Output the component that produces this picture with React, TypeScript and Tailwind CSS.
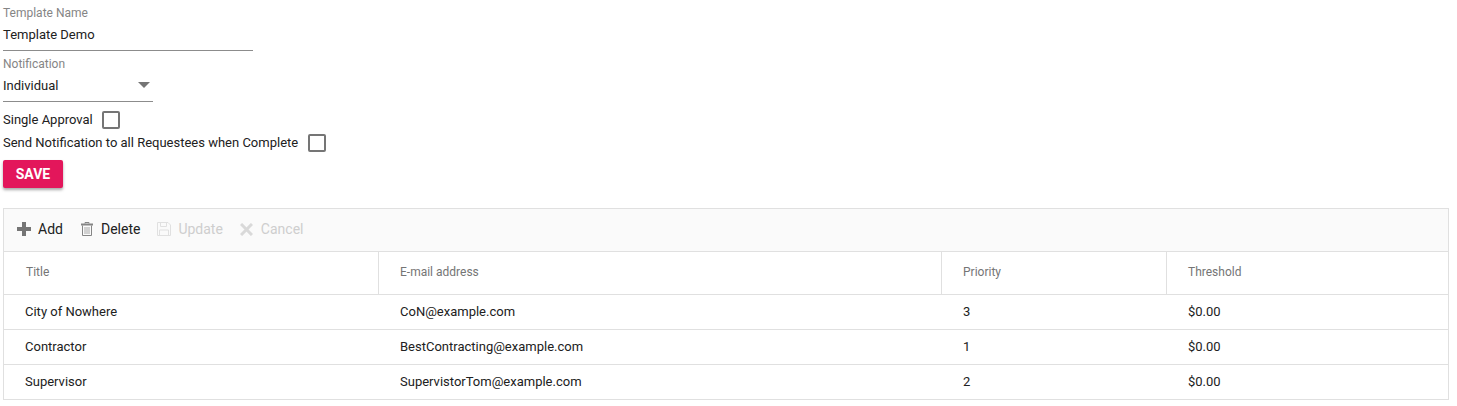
const rows = [
  ["City of Nowhere", "CoN@example.com", "3", "$0.00"],
  ["Contractor", "BestContracting@example.com", "1", "$0.00"],
  ["Supervisor", "SupervistorTom@example.com", "2", "$0.00"],
];
const gridCols = "grid grid-cols-[375px_563px_225px_1fr]";

function Plus() {
  return (
    <svg width="14" height="14" viewBox="0 0 14 14" className="text-[#757575]">
      <path d="M5 0h4v5h5v4H9v5H5V9H0V5h5z" fill="currentColor" />
    </svg>
  );
}
function Trash() {
  return (
    <svg width="12" height="14" viewBox="0 0 12 14" fill="none" stroke="#858585" strokeWidth="1">
      <path d="M0 2.5h12" strokeWidth="2" />
      <path d="M4 1.5V.5h4v1M1.5 3.5v10h9v-10" />
      <path d="M4 5v7M6 5v7M8 5v7" stroke="#a8a8a8" />
    </svg>
  );
}
function Floppy() {
  return (
    <svg width="14" height="14" viewBox="0 0 14 14" fill="none" stroke="#e0e0e0" strokeWidth="1">
      <path d="M.5.5h10.5l2.5 2.5v10.5H.5z" />
      <path d="M3.5.5v4h6v-4M2.5 13.5V8h9v5.5" />
    </svg>
  );
}
function Cross() {
  return (
    <svg width="13" height="13" viewBox="0 0 13 13" stroke="#d9d9d9" strokeWidth="3" fill="none">
      <path d="M1 1l11 11M12 1L1 12" />
    </svg>
  );
}
function Box() {
  return <span className="block w-[18px] h-[18px] rounded-[2px] border-2 border-[#757575]" />;
}

export default function App() {
  return (
    <div className="font-['Roboto',sans-serif] bg-white w-[1457px] h-[406px] overflow-hidden pl-[3px] pr-2 text-[13px] leading-[20px] text-[#212121]">
      <div className="w-[250px] h-[51px] pt-[5px] border-b border-[#8c8c8c]">
        <div className="text-[12px] leading-[16px] text-[#858585]">Template Name</div>
        <div className="mt-[4px]">Template Demo</div>
      </div>
      <div className="w-[150px] h-[51px] pt-[5px] border-b border-[#8c8c8c] relative">
        <div className="text-[12px] leading-[16px] text-[#858585]">Notification</div>
        <div className="mt-[4px]">Individual</div>
        <span className="absolute right-[3px] top-[31px] w-0 h-0 border-x-[6px] border-x-transparent border-t-[6px] border-t-[#757575]" />
      </div>
      <div className="flex items-center h-[23px] mt-[6px]">
        <span>Single Approval</span>
        <span className="ml-[9px]"><Box /></span>
      </div>
      <div className="flex items-center h-[23px]">
        <span>Send Notification to all Requestees when Complete</span>
        <span className="ml-[10px]"><Box /></span>
      </div>
      <button className="block mt-[6px] w-[60px] h-[28px] rounded-[2px] bg-[#e3165b] text-white text-[14px] font-bold shadow-[0_2px_3px_rgba(0,0,0,0.35)]">
        SAVE
      </button>
      <div className="mt-[20px] border border-[#e0e0e0]">
        <div className="h-[43px] bg-[#fafafa] border-b border-[#e0e0e0] flex items-center pl-[13px] pb-[2px] text-[14px]">
          <span className="flex items-center"><Plus /><span className="ml-[7px]">Add</span></span>
          <span className="flex items-center ml-[18px]"><Trash /><span className="ml-[8px]">Delete</span></span>
          <span className="flex items-center ml-[17px] text-[#cecece]"><Floppy /><span className="ml-[7px]">Update</span></span>
          <span className="flex items-center ml-[17px] text-[#cecece]"><Cross /><span className="ml-[8px]">Cancel</span></span>
        </div>
        <div className={`${gridCols} h-[43px] border-b border-[#e0e0e0] text-[12px] text-[#757575]`}>
          {["Title", "E-mail address", "Priority", "Threshold"].map((h, i) => (
            <div key={h} className={`flex items-center pb-[2px] ${i < 3 ? "border-r border-[#e0e0e0]" : ""} ${i === 0 ? "pl-[22px]" : "pl-[21px]"}`}>
              {h}
            </div>
          ))}
        </div>
        {rows.map((r, ri) => (
          <div key={r[0]} className={`${gridCols} ${ri < 2 ? "h-[35px] border-b border-[#e0e0e0]" : "h-[34px]"}`}>
            {r.map((c, i) => (
              <div key={i} className="flex items-center pl-[21px] pb-[1px]">{c}</div>
            ))}
          </div>
        ))}
      </div>
    </div>
  );
}
